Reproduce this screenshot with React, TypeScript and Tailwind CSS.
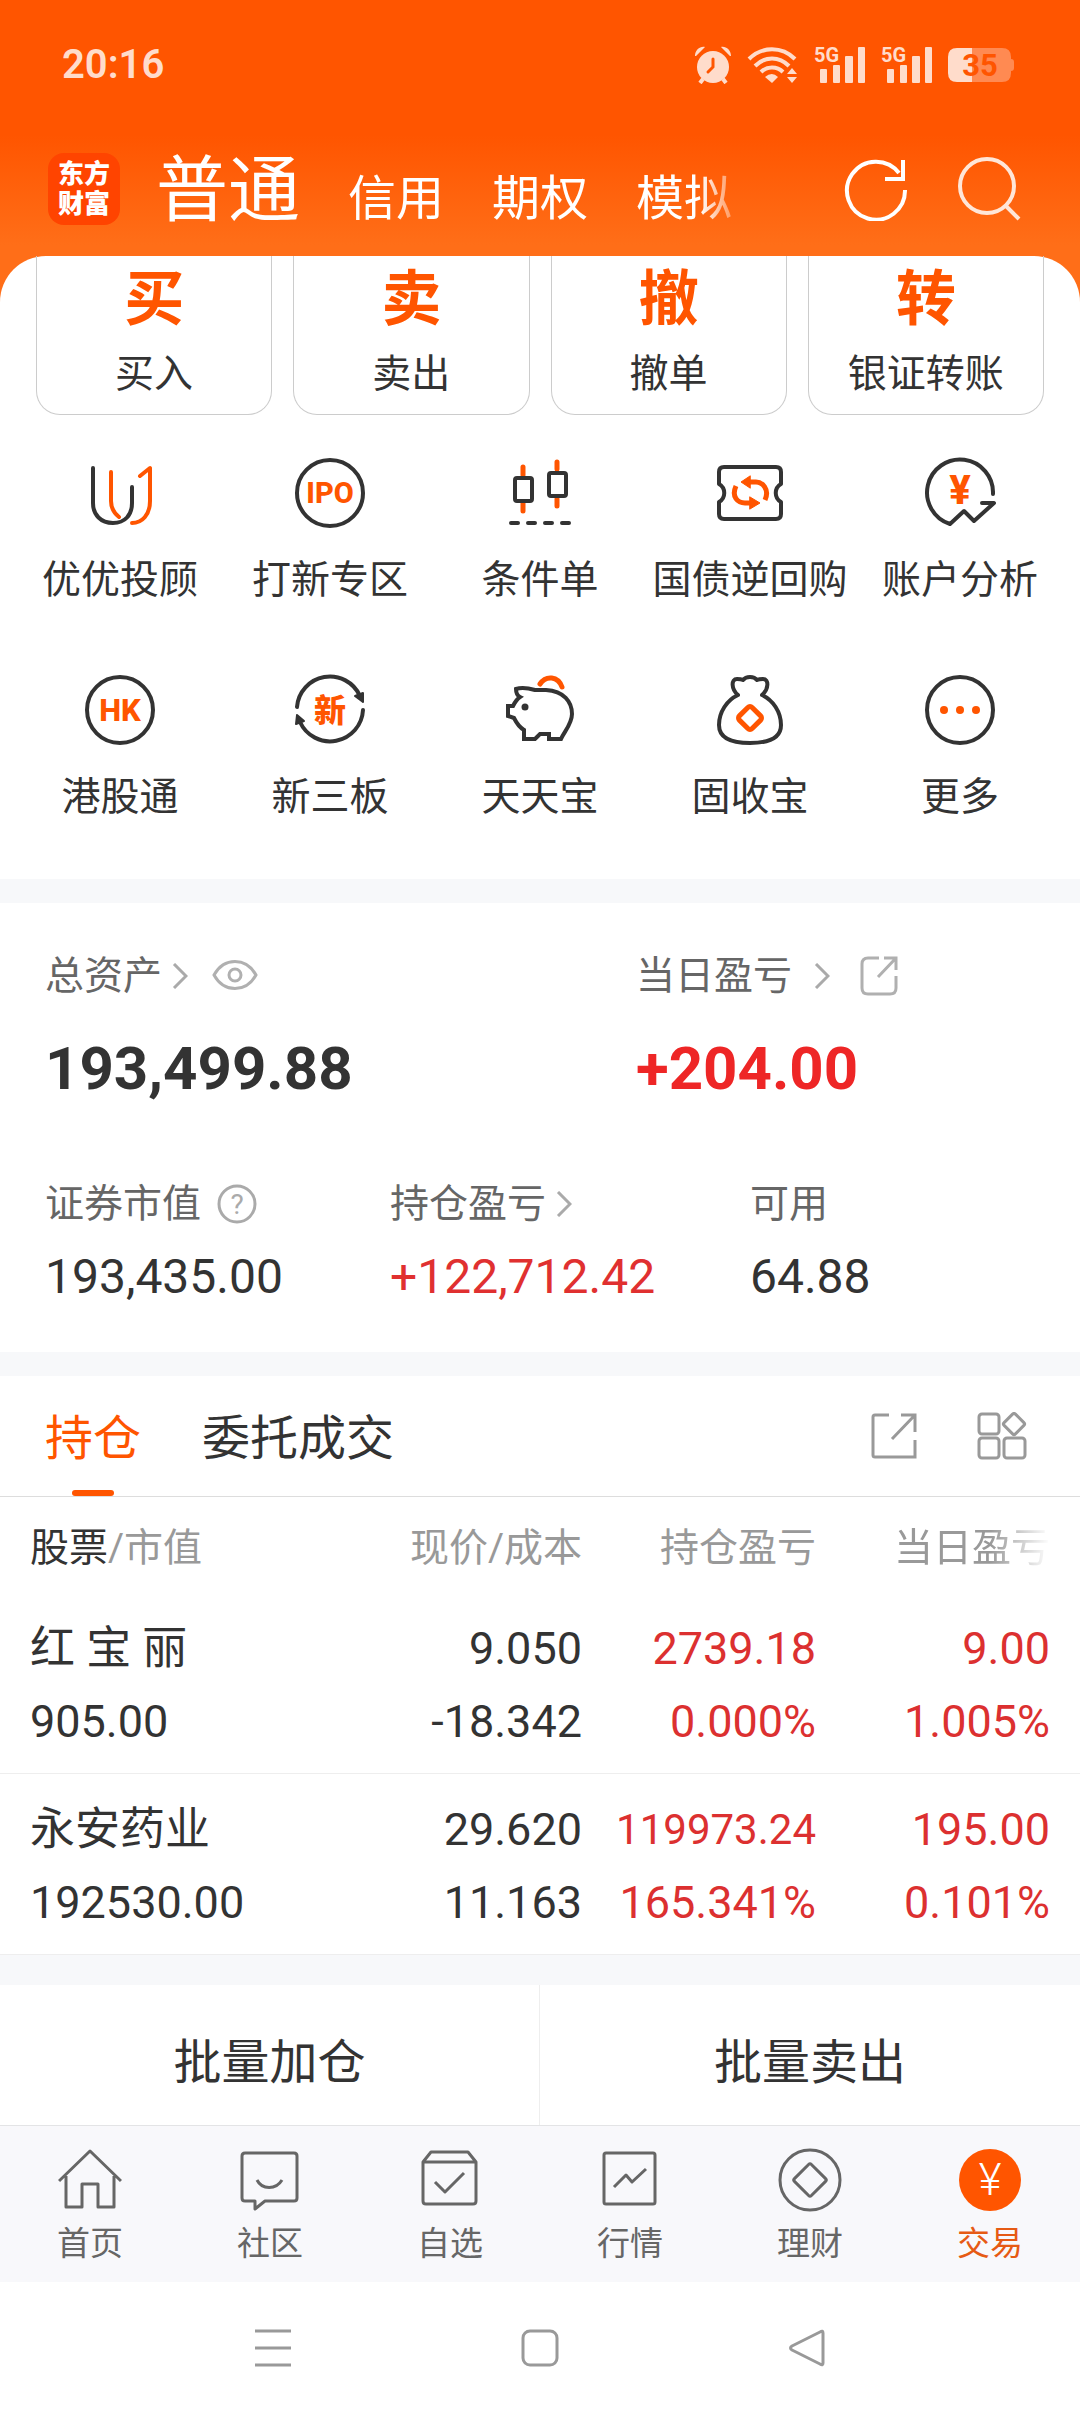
import type { ReactNode } from 'react';

const DARK = '#333333';
const ORANGE = '#ff5500';

function IconBox({ size, children }: { size: number; children: ReactNode }) {
  return (
    <svg
      width={size}
      height={size}
      viewBox={`0 0 ${size} ${size}`}
      fill="none"
      strokeLinecap="round"
      strokeLinejoin="round"
      aria-hidden="true"
      className="shrink-0"
    >
      {children}
    </svg>
  );
}

function IconLabel({ x = 36, y, size, children }: { x?: number; y: number; size: number; children: ReactNode }) {
  return (
    <text x={x} y={y} fontSize={size} fontWeight={800} textAnchor="middle" fill={ORANGE}>
      {children}
    </text>
  );
}

/* ---------- status bar ---------- */

function Signal() {
  return (
    <svg width="52" height="50" viewBox="0 -6 52 50" fill="currentColor" aria-hidden="true">
      <text x="0" y="16" fontSize="20" fontWeight={700}>5G</text>
      <rect x="6" y="23" width="7" height="14" rx="1" />
      <rect x="19" y="19" width="7" height="18" rx="1" />
      <rect x="31" y="10" width="8" height="27" rx="1" />
      <rect x="44" y="1" width="7" height="36" rx="1" />
    </svg>
  );
}

function StatusBar() {
  return (
    <div className="flex h-[126px] items-center justify-between pt-1 pr-[66px] pl-[62px] text-[#ffdccb]">
      <span className="text-[40px] leading-[48px] font-semibold">20:16</span>
      <div className="flex items-center gap-[15px]">
        <svg width="38" height="38" viewBox="0 0 38 38" fill="currentColor" aria-hidden="true">
          <circle cx="19" cy="21" r="16" />
          <path d="M1 10C1 4 6 0 11 1L2 10zM37 10C37 4 32 0 27 1l9 9z" />
          <path d="M9 33l-3 4M29 33l3 4" stroke="currentColor" strokeWidth="4" />
          <path d="M19 13v8l-5 5" stroke="#ff5500" strokeWidth="3" fill="none" strokeLinecap="round" />
        </svg>
        <svg width="52" height="38" viewBox="0 0 52 38" fill="none" stroke="currentColor" strokeWidth="4" aria-hidden="true">
          <path d="M2 13C15 0 35 0 48 13M8 20C18 10 32 10 42 20M14 26C20 20 30 20 36 26" />
          <path d="M18 31q7-6 13 0l-6 6z" fill="currentColor" stroke="none" />
          <path d="M40 28l5-6 5 6zM40 31l5 6 5-6z" fill="currentColor" stroke="none" />
        </svg>
        <Signal />
        <Signal />
        <svg width="66" height="36" viewBox="0 0 66 36" aria-label="35%">
          <path d="M9 1H24V35H9Q0 35 0 26V10Q0 1 9 1z" fill="#ffdccb" />
          <path d="M24 1H54Q63 1 63 10V12Q66 12 66 15V21Q66 24 63 24V26Q63 35 54 35H24z" fill="#ff8a52" />
          <text x="32" y="29" fontSize="31" fontWeight={700} textAnchor="middle" fill="#ff5500">35</text>
        </svg>
      </div>
    </div>
  );
}

function TopNav() {
  return (
    <header className="flex h-[130px] items-center pr-[58px] pb-1 pl-12 text-white">
      <div className="flex h-[72px] w-[72px] flex-col items-center justify-center rounded-2xl bg-[#ff4400] text-[26px] leading-[30px] font-black">
        <span>东方</span>
        <span>财富</span>
      </div>
      <nav className="ml-9 flex items-baseline gap-12 pt-3 pr-4 [mask-image:linear-gradient(to_left,transparent,black_48px)]">
        <button className="text-[72px] leading-[72px]">普通</button>
        <button className="text-[48px] leading-[72px]">信用</button>
        <button className="text-[48px] leading-[72px]">期权</button>
        <button className="text-[48px] leading-[72px]">模拟</button>
      </nav>
      <div className="ml-auto flex gap-[50px]">
        <button aria-label="刷新">
          <svg width="64" height="64" viewBox="0 0 64 64" fill="none" stroke="white" strokeWidth="4" aria-hidden="true">
            <path d="M61 33A29 29 0 1 1 55 16" />
            <path d="M59 3V22H41" />
          </svg>
        </button>
        <button aria-label="搜索">
          <svg width="64" height="64" viewBox="0 0 64 64" fill="none" stroke="#ffe6d8" strokeWidth="4" aria-hidden="true">
            <circle cx="29" cy="29" r="27" />
            <path d="M47 48L61 62" />
          </svg>
        </button>
      </div>
    </header>
  );
}

/* ---------- trade entry ---------- */

const actions = [
  { glyph: '买', label: '买入' },
  { glyph: '卖', label: '卖出' },
  { glyph: '撤', label: '撤单' },
  { glyph: '转', label: '银证转账' },
];

const shortcuts: { label: string; icon: ReactNode }[] = [
  {
    label: '优优投顾',
    icon: (
      <g strokeWidth="4">
        <path stroke={DARK} d="M9 11V46C9 58 17 66 29 66S48 58 48 46V30" />
        <path stroke={ORANGE} d="M27 15V44C27 51 30 56 35 60M56 19L66 11V44C66 58 58 66 48 66" />
      </g>
    ),
  },
  {
    label: '打新专区',
    icon: (
      <>
        <circle cx="36" cy="36" r="33" stroke={DARK} strokeWidth="4" />
        <IconLabel y={46} size={29}>IPO</IconLabel>
      </>
    ),
  },
  {
    label: '条件单',
    icon: (
      <>
        <path stroke={ORANGE} strokeWidth="5" d="M19 10V18M19 46V54M53 5V12M53 42V49" />
        <g stroke={DARK} strokeWidth="4">
          <rect x="11" y="21" width="17" height="23" rx="2" />
          <rect x="45" y="16" width="17" height="23" rx="2" />
          <path d="M7 66h7M24 66h7M41 66h7M58 66h7" />
        </g>
      </>
    ),
  },
  {
    label: '国债逆回购',
    icon: (
      <>
        <path
          stroke={DARK}
          strokeWidth="4"
          d="M10 10H62Q67 10 67 15V27C60 31 60 41 67 45V57Q67 62 62 62H10Q5 62 5 57V45C12 41 12 31 5 27V15Q5 10 10 10Z"
        />
        <path stroke={ORANGE} strokeWidth="5" strokeLinecap="butt" d="M22 29C17 40 24 46 31 46H37M51 43C56 32 48 25 42 25H36" />
        <path fill={ORANGE} stroke={ORANGE} d="M36 40L46 46L36 52ZM36 19L27 25L36 31Z" />
      </>
    ),
  },
  {
    label: '账户分析',
    icon: (
      <>
        <path stroke={DARK} strokeWidth="4" d="M69 37A33 33 0 1 0 26 67L40 54L50 64L70 46H58" />
        <IconLabel y={47} size={40}>¥</IconLabel>
      </>
    ),
  },
  {
    label: '港股通',
    icon: (
      <>
        <circle cx="36" cy="36" r="33" stroke={DARK} strokeWidth="4" />
        <IconLabel y={47} size={31}>HK</IconLabel>
      </>
    ),
  },
  {
    label: '新三板',
    icon: (
      <>
        <path stroke={DARK} strokeWidth="4" d="M3 33A33 33 0 0 1 66 22M69 36A33 33 0 0 1 6 48" />
        <path fill={DARK} stroke={DARK} strokeWidth="2" d="M61 22L69 19V28ZM3 41L2 50L10 47Z" />
        <IconLabel y={48} size={32}>新</IconLabel>
      </>
    ),
  },
  {
    label: '天天宝',
    icon: (
      <>
        <path
          stroke={DARK}
          strokeWidth="4"
          strokeLinejoin="miter"
          d="M12 15C18 13 24 14 31 16H42C60 17 68 28 68 40C68 50 60 58 57 65H45V60H36L31 65H20V56C15 53 12 48 10 44L4 42V32H9C11 28 13 25 16 23C12 21 12 18 12 15Z"
        />
        <circle cx="21" cy="33" r="3.5" fill={DARK} />
        <path stroke={ORANGE} strokeWidth="5" d="M36 10C42 1 54 2 58 13" />
      </>
    ),
  },
  {
    label: '固收宝',
    icon: (
      <>
        <path
          stroke={DARK}
          strokeWidth="4"
          d="M24 21C13 26 5 38 5 51C5 64 16 69 36 69S67 64 67 51C67 38 59 26 48 21C55 15 55 5 49 5C46 5 45 5 43 6C40 2 32 2 29 6C27 5 26 5 23 5C17 5 17 15 24 21"
        />
        <rect x="27" y="35" width="18" height="18" rx="3" transform="rotate(45 36 44)" stroke={ORANGE} strokeWidth="5" />
      </>
    ),
  },
  {
    label: '更多',
    icon: (
      <>
        <circle cx="36" cy="36" r="33" stroke={DARK} strokeWidth="4" />
        <g fill={ORANGE}>
          <circle cx="20" cy="36" r="4" />
          <circle cx="36" cy="36" r="4" />
          <circle cx="52" cy="36" r="4" />
        </g>
      </>
    ),
  },
];

function TradeEntry() {
  return (
    <section className="rounded-t-[46px] bg-white pb-[58px]">
      <div className="grid grid-cols-4 gap-[21px] px-9">
        {actions.map((a) => (
          <button
            key={a.label}
            className="flex flex-col items-center rounded-b-3xl border-x border-b border-[#cccccc] pt-[14px] pb-4"
          >
            <span className="text-[60px] leading-[60px] font-bold text-[#ff5500]">{a.glyph}</span>
            <span className="mt-5 text-[39px] leading-[48px]">{a.label}</span>
          </button>
        ))}
      </div>
      <div className="mt-[42px] grid grid-cols-5 gap-y-[70px] px-[15px]">
        {shortcuts.map((s) => (
          <button key={s.label} className="flex flex-col items-center">
            <IconBox size={72}>{s.icon}</IconBox>
            <span className="mt-[27px] text-[39px] leading-[48px] whitespace-nowrap">{s.label}</span>
          </button>
        ))}
      </div>
    </section>
  );
}

/* ---------- assets ---------- */

function Chevron() {
  return (
    <svg width="16" height="26" viewBox="0 0 16 26" fill="none" stroke="#aaaaaa" strokeWidth="3" aria-hidden="true">
      <path d="M2 1L14 13L2 25" />
    </svg>
  );
}

function Assets() {
  return (
    <section className="bg-white px-[45px] pt-[49px] pb-[45px]">
      <div className="grid grid-cols-[591fr_399fr]">
        <div>
          <div className="flex items-center text-[39px] leading-[48px] text-[#666666]">
            <button className="flex items-center gap-[10px]">
              总资产
              <Chevron />
            </button>
            <button aria-label="隐藏金额" className="ml-6">
              <svg width="46" height="32" viewBox="0 0 46 32" fill="none" stroke="#b0b0b0" strokeWidth="3" aria-hidden="true">
                <path d="M2 15C12-3 34-3 44 15C34 33 12 33 2 15Z" />
                <circle cx="23" cy="15" r="6" />
              </svg>
            </button>
          </div>
          <p className="mt-[33px] text-[60px] leading-[72px] font-bold">193,499.88</p>
        </div>
        <div>
          <div className="flex items-center text-[39px] leading-[48px] text-[#666666]">
            <button className="flex items-center gap-[22px]">
              当日盈亏
              <Chevron />
            </button>
            <button aria-label="分享" className="ml-[30px]">
              <svg width="38" height="40" viewBox="0 0 38 40" fill="none" stroke="#b0b0b0" strokeWidth="3" aria-hidden="true">
                <path d="M19 2H8Q2 2 2 8V32Q2 38 8 38H30Q36 38 36 32V20M24 2H36V14M36 2L18 21" />
              </svg>
            </button>
          </div>
          <p className="mt-[33px] text-[60px] leading-[72px] font-bold text-[#ee2626]">+204.00</p>
        </div>
      </div>
      <div className="mt-[75px] grid grid-cols-[345fr_360fr_285fr]">
        <div>
          <div className="flex items-center gap-4 text-[39px] leading-[48px] text-[#666666]">
            证券市值
            <button aria-label="说明">
              <svg width="40" height="40" viewBox="0 0 40 40" fill="none" stroke="#aaaaaa" strokeWidth="3" aria-hidden="true">
                <circle cx="20" cy="20" r="18" />
                <text x="20" y="30" fontSize="28" textAnchor="middle" fill="#aaaaaa" stroke="none">?</text>
              </svg>
            </button>
          </div>
          <p className="mt-[19px] text-[48px] leading-[60px]">193,435.00</p>
        </div>
        <div>
          <button className="flex items-center gap-[10px] text-[39px] leading-[48px] text-[#666666]">
            持仓盈亏
            <Chevron />
          </button>
          <p className="mt-[19px] text-[48px] leading-[60px] text-[#e03030]">+122,712.42</p>
        </div>
        <div>
          <div className="text-[39px] leading-[48px] text-[#666666]">可用</div>
          <p className="mt-[19px] text-[48px] leading-[60px]">64.88</p>
        </div>
      </div>
    </section>
  );
}

/* ---------- positions ---------- */

const positions = [
  { name: '红 宝 丽', value: '905.00', price: '9.050', cost: '-18.342', profit: '2739.18', profitRate: '0.000%', day: '9.00', dayRate: '1.005%' },
  { name: '永安药业', value: '192530.00', price: '29.620', cost: '11.163', profit: '119973.24', profitRate: '165.341%', day: '195.00', dayRate: '0.101%' },
];

function Positions() {
  return (
    <section className="bg-white">
      <div className="flex h-[121px] items-stretch border-b border-[#dddddd] pr-[53px] pl-[45px]">
        <button className="relative pt-[5px] text-[48px] text-[#ff5500]">
          持仓
          <span className="absolute bottom-0 left-1/2 h-[6px] w-[42px] -translate-x-1/2 rounded-sm bg-[#ff5500]" />
        </button>
        <button className="ml-[61px] pt-[5px] text-[48px]">委托成交</button>
        <div className="ml-auto flex items-center gap-[60px]">
          <button aria-label="分享持仓">
            <svg width="46" height="46" viewBox="0 0 46 46" fill="none" stroke="#999999" strokeWidth="3" aria-hidden="true">
              <path d="M18 2H4Q2 2 2 4V42Q2 44 4 44H44V27M30 2H44V19M44 2L21 26" />
            </svg>
          </button>
          <button aria-label="布局">
            <svg width="50" height="48" viewBox="0 0 50 48" fill="none" stroke="#999999" strokeWidth="3" aria-hidden="true">
              <rect x="2" y="2" width="20" height="20" rx="3" />
              <rect x="2" y="26" width="20" height="20" rx="3" />
              <rect x="27" y="26" width="21" height="20" rx="3" />
              <rect x="29" y="4" width="16" height="16" rx="2" transform="rotate(45 37 12)" />
            </svg>
          </button>
        </div>
      </div>
      <table className="w-full table-fixed">
        <thead>
          <tr className="h-[95px] text-right text-[39px] leading-[48px] text-[#999999]">
            <th className="pt-[6px] pl-[30px] text-left font-normal">
              <span className="text-[#333333]">股票</span>/市值
            </th>
            <th className="w-[234px] pt-[6px] font-normal">现价/成本</th>
            <th className="w-[234px] pt-[6px] font-normal">持仓盈亏</th>
            <th className="w-[264px] pt-[6px] pr-[30px] font-normal">
              <span className="inline-block align-top [mask-image:linear-gradient(to_left,transparent,black_60px)]">当日盈亏</span>
            </th>
          </tr>
        </thead>
        <tbody>
          {positions.map((p) => (
            <tr key={p.name} className="h-[181px] border-b border-[#eeeeee] text-right text-[45px] leading-[73px]">
              <td className="pt-[5px] pl-[30px] text-left">
                <div>{p.name}</div>
                <div>{p.value}</div>
              </td>
              <td className="pt-[5px]">
                <div>{p.price}</div>
                <div>{p.cost}</div>
              </td>
              <td className="pt-[5px] text-[#dc3030]">
                {/* long amounts drop a size to stay clear of the price column */}
                <div className={p.profit.length > 8 ? 'text-[42px]' : 'text-[45px]'}>{p.profit}</div>
                <div>{p.profitRate}</div>
              </td>
              <td className="pt-[5px] pr-[30px] text-[#dc3030]">
                <div>{p.day}</div>
                <div>{p.dayRate}</div>
              </td>
            </tr>
          ))}
        </tbody>
      </table>
    </section>
  );
}

/* ---------- bottom bars ---------- */

const tabs: { label: string; icon: ReactNode; active?: boolean }[] = [
  { label: '首页', icon: <path d="M1 33L32 3L63 33M8 28V59H24V36H40V59H56V28" /> },
  {
    label: '社区',
    icon: <path d="M7 5H56Q59 5 59 8V50Q59 53 56 53H27L17 61V53H7Q4 53 4 50V8Q4 5 7 5ZM19 32C24 42 38 42 44 32" />,
  },
  {
    label: '自选',
    icon: <path d="M5 14L13 4H50L58 14V53Q58 56 55 56H8Q5 56 5 53ZM5 14H58M17 34L27 44L46 25" />,
  },
  {
    label: '行情',
    icon: (
      <>
        <rect x="6" y="5" width="51" height="51" rx="2" />
        <path d="M16 39L28 27L34 34L48 21" />
      </>
    ),
  },
  {
    label: '理财',
    icon: (
      <>
        <circle cx="32" cy="32" r="30" />
        <rect x="20" y="20" width="24" height="24" rx="2" transform="rotate(45 32 32)" />
      </>
    ),
  },
  {
    label: '交易',
    active: true,
    icon: (
      <>
        <circle cx="32" cy="32" r="31" fill={ORANGE} stroke="none" />
        <text x="32" y="47" fontSize="44" fontWeight={300} textAnchor="middle" fill="white" stroke="none">¥</text>
      </>
    ),
  },
];

function TabBar() {
  return (
    <nav className="grid grid-cols-6 border-t border-[#e3e4e6] bg-[#f8f8fb] pt-[22px] pb-[18px]">
      {tabs.map((t) => (
        <a
          key={t.label}
          href="#"
          className={`flex flex-col items-center text-[33px] leading-10 ${t.active ? 'text-[#e65a14]' : 'text-[#666666]'}`}
        >
          <IconBox size={64}>
            <g stroke="#666666" strokeWidth="3" strokeLinecap="butt">
              {t.icon}
            </g>
          </IconBox>
          <span className="mt-3">{t.label}</span>
        </a>
      ))}
    </nav>
  );
}

function SystemBar() {
  return (
    <div className="flex h-[132px] items-center justify-center gap-[229px] bg-white">
      <button aria-label="最近任务">
        <IconBox size={38}>
          <path d="M1 2H37M1 19H37M1 36H37" stroke="#999999" strokeWidth="3" strokeLinecap="butt" />
        </IconBox>
      </button>
      <button aria-label="主屏幕">
        <IconBox size={38}>
          <rect x="2" y="2" width="34" height="34" rx="7" stroke="#999999" strokeWidth="3" />
        </IconBox>
      </button>
      <button aria-label="返回">
        <IconBox size={38}>
          <path d="M35 4V34Q35 37 32 35L4 21Q1 19 4 17L32 3Q35 1 35 4Z" stroke="#999999" strokeWidth="3" />
        </IconBox>
      </button>
    </div>
  );
}

export default function App() {
  return (
    <div className="bg-[#f7f8fa] font-[Roboto,'Noto_Sans_CJK_SC',sans-serif] text-[#333333]">
      <div className="bg-[linear-gradient(#ff5500_0px,#ff5500_135px,#ff6e18_245px)]">
        <StatusBar />
        <TopNav />
        <TradeEntry />
      </div>
      <main className="mt-6">
        <Assets />
        <div className="h-6" />
        <Positions />
        <div className="mt-[30px] grid grid-cols-2 bg-white">
          <button className="h-[140px] border-r border-[#eeeeee] pt-4 text-[48px]">批量加仓</button>
          <button className="h-[140px] pt-4 text-[48px]">批量卖出</button>
        </div>
      </main>
      <TabBar />
      <SystemBar />
    </div>
  );
}
